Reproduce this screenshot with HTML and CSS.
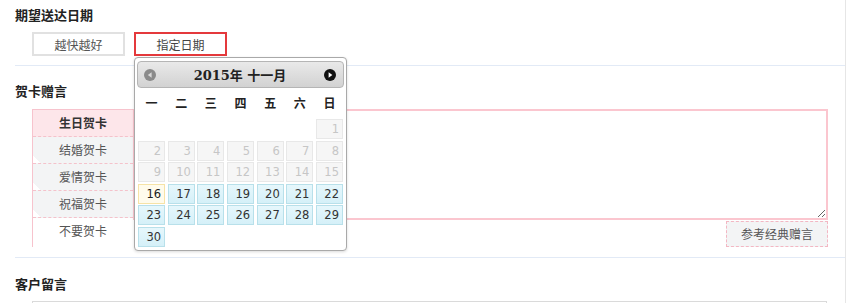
FILE: index.html
```html
<!DOCTYPE html>
<html lang="zh-CN">
<head>
    <meta charset="UTF-8">
    <title>订单信息</title>
    <link rel="stylesheet" href="styles.css">
</head>
<body>
    <div class="page">
        <div class="section">
            <h3 class="section-title">期望送达日期</h3>
            <div class="date-options">
                <span class="opt-button">越快越好</span>
                <span class="picker-anchor">
                    <span class="opt-button selected">指定日期</span>

                    <!-- datepicker popup -->
                    <div class="datepicker">
                        <div class="dp-header">
                            <svg class="dp-nav" width="12" height="12" viewBox="0 0 12 12">
                                <circle cx="6" cy="6" r="6" fill="#8a8a8a"/>
                                <polygon points="7.6,3.2 7.6,8.8 3.8,6" fill="#d8d8d8"/>
                            </svg>
                            <span class="dp-title">2015年 十一月</span>
                            <svg class="dp-nav" width="12" height="12" viewBox="0 0 12 12">
                                <circle cx="6" cy="6" r="6" fill="#111"/>
                                <polygon points="4.6,3.2 4.6,8.8 8.4,6" fill="#fff"/>
                            </svg>
                        </div>
                        <div class="dp-weekdays">
                            <span>一</span><span>二</span><span>三</span><span>四</span><span>五</span><span>六</span><span>日</span>
                        </div>
                        <div class="dp-days" id="dp-days"></div>
                    </div>
                </span>
            </div>
        </div>

        <div class="section">
            <h3 class="section-title">贺卡赠言</h3>
            <div class="card-area">
                <ul class="card-tabs">
                    <li class="active">生日贺卡</li>
                    <li>结婚贺卡</li>
                    <li>爱情贺卡</li>
                    <li>祝福贺卡</li>
                    <li class="none">不要贺卡</li>
                </ul>
                <div class="card-body">
                    <textarea class="card-text"></textarea>
                    <span class="ref-button">参考经典赠言</span>
                </div>
            </div>
        </div>

        <div class="section">
            <h3 class="section-title">客户留言</h3>
            <textarea class="note-text"></textarea>
        </div>
    </div>

    <script>
        // November 2015 starts on a Sunday (last column, Monday first)
        var days = document.getElementById('dp-days');
        var html = '';
        for (var i = 0; i < 6; i++) {
            html += '<span class="blank"></span>';
        }
        for (var d = 1; d <= 30; d++) {
            var cls = d < 16 ? 'off' : (d === 16 ? 'today' : 'on');
            html += '<span class="' + cls + '">' + d + '</span>';
        }
        days.innerHTML = html;
    </script>
</body>
</html>
```

FILE: styles.css
```css
body {
    margin: 0;
    font-family: "Noto Sans CJK SC", "Microsoft YaHei", sans-serif;
    font-size: 12px;
    color: #333;
    background: #fff;
}
.page {
    width: 845px;
    min-height: 303px;
    border-right: 1px solid #e6e6e6;
}
.section {
    margin-left: 15px;
    border-bottom: 1px solid #e2eaf6;
}
.section:first-child {
    padding: 5px 0 9px;
}
.section:nth-child(2) {
    padding: 15px 0 10px;
}
.section:last-child {
    padding-top: 16px;
    border-bottom: none;
}
.section-title {
    margin: 0;
    font-size: 13px;
    line-height: 20px;
    font-weight: bold;
    color: #222;
}

/* delivery date options */
.date-options {
    display: flex;
    gap: 9px;
    margin: 7px 0 0 17px;
}
.picker-anchor {
    position: relative;
}
.opt-button {
    display: flex;
    align-items: center;
    justify-content: center;
    box-sizing: border-box;
    width: 93px;
    height: 24px;
    border: 2px solid #e1e1e1;
    color: #555;
}
.opt-button.selected {
    border-color: #e4393c;
    color: #444;
}

/* datepicker */
.datepicker {
    position: absolute;
    left: 0;
    top: 25px;
    z-index: 10;
    box-sizing: border-box;
    width: 213px;
    height: 194px;
    padding: 3px 2px;
    background: #fff;
    border: 1px solid #a9a9a9;
    border-radius: 4px;
    box-shadow: 0 1px 3px rgba(0,0,0,0.15);
    font-family: "DejaVu Sans", Verdana, "Noto Sans CJK SC", sans-serif;
}
.dp-header {
    display: flex;
    align-items: center;
    justify-content: space-between;
    box-sizing: border-box;
    height: 27px;
    padding: 0 7px 0 6px;
    background: linear-gradient(#e9e9e9, #d2d2d2);
    border: 1px solid #b5b5b5;
    border-radius: 4px;
}
.dp-title {
    font-family: "DejaVu Serif", "Noto Sans CJK SC", serif;
    font-size: 13px;
    font-weight: bold;
    color: #222;
}
.dp-weekdays {
    display: grid;
    grid-template-columns: repeat(7, 1fr);
    column-gap: 2.5px;
    margin: 5px 1px 0;
    height: 20px;
    line-height: 20px;
    text-align: center;
    font-family: "Noto Sans CJK SC", sans-serif;
    font-weight: bold;
    font-size: 12px;
    color: #222;
}
.dp-days {
    display: grid;
    grid-template-columns: repeat(7, 1fr);
    grid-auto-rows: 20px;
    column-gap: 2.5px;
    row-gap: 1.5px;
    margin: 6px 1px 0;
}
.dp-days span {
    box-sizing: border-box;
    padding-right: 3px;
    line-height: 18px;
    text-align: right;
    font-size: 11.5px;
}
.dp-days .off {
    background: #f6f6f6;
    border: 1px solid #e8e8e8;
    color: #c6c6c6;
}
.dp-days .on {
    background: linear-gradient(#e6f7fc, #d5f0f8);
    border: 1px solid #b8e0ea;
    color: #333;
}
.dp-days .today {
    background: #fffbec;
    border: 1px solid #f6e3a6;
    color: #222;
}

/* greeting card */
.card-area {
    display: flex;
    margin: 8px 0 0 17px;
}
.card-tabs {
    list-style: none;
    margin: 0;
    padding: 0;
    width: 100px;
    border-left: 1px solid #f7c3cd;
    border-top: 1px solid #f7c3cd;
}
.card-tabs li {
    height: 26px;
    line-height: 26px;
    text-align: center;
    color: #555;
    border-bottom: 1px dashed #f4c2cb;
    background: linear-gradient(45deg, #fff 5px, #f3f4f5 5px);
}
.card-tabs li.active {
    background: #fde6ea;
    color: #333;
    font-weight: bold;
}
.card-tabs li.none {
    background: none;
    border-bottom: none;
}
.card-body {
    display: flex;
    flex-direction: column;
    align-items: flex-end;
    width: 695px;
}
.card-text {
    box-sizing: border-box;
    width: 695px;
    height: 111px;
    margin: 0;
    border: 2px solid #fbc6cf;
    outline: none;
}
.ref-button {
    box-sizing: border-box;
    width: 102px;
    height: 26px;
    margin-top: 1px;
    line-height: 24px;
    text-align: center;
    background: #f3f4f5;
    border: 1px dashed #f3b7c3;
    color: #555;
}

/* customer note */
.note-text {
    display: block;
    box-sizing: border-box;
    width: 795px;
    height: 60px;
    margin: 7px 0 0 17px;
    border: 1px solid #dadada;
}
```
